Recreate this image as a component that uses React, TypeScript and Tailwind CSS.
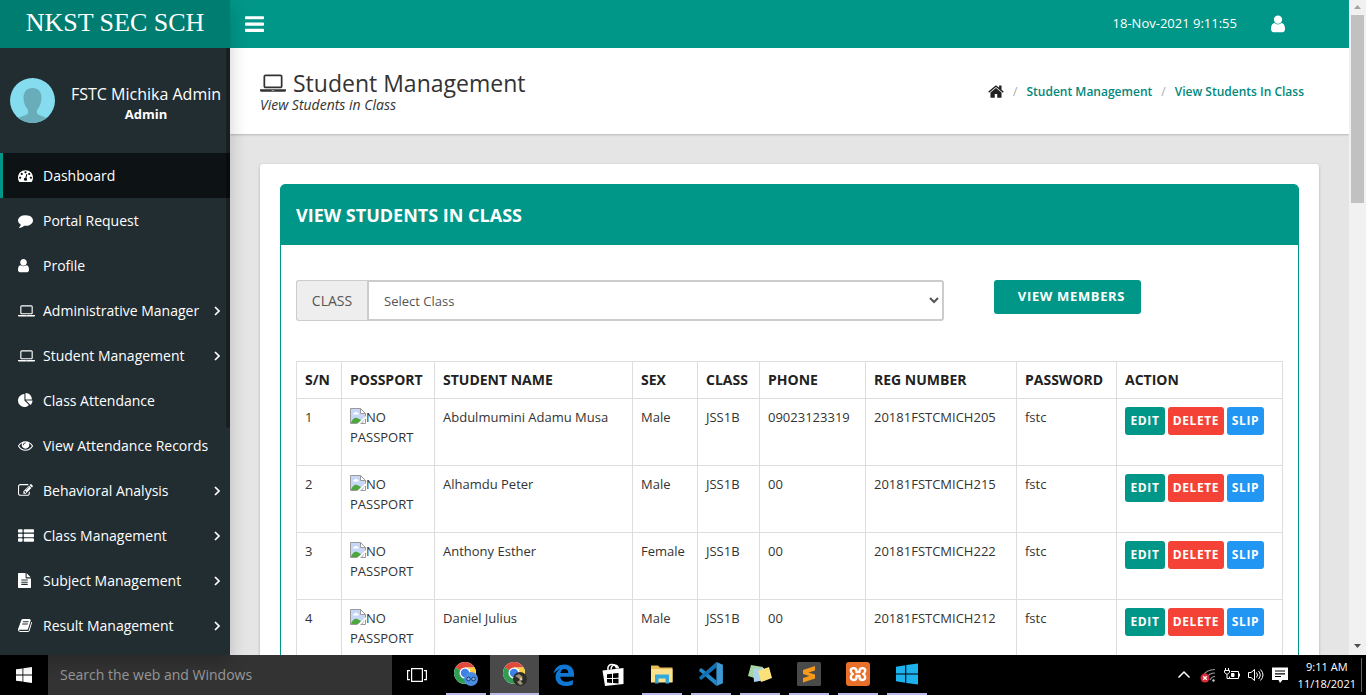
import React from "react";

type Glyph = { box: string; w: string; d: string };

const glyphs: Record<string, Glyph> = {
  dashboard: {
    box: "0 0 1792 1792",
    w: "w-[15px]",
    d: "M384 1152q0-53-37.500-90.500t-90.500-37.500-90.500 37.500-37.500 90.500 37.500 90.500 90.500 37.500 90.500-37.500 37.500-90.500zm192-448q0-53-37.500-90.500t-90.500-37.500-90.500 37.500-37.500 90.500 37.500 90.500 90.500 37.500 90.500-37.500 37.500-90.500zm428 481l101-382q6-26-7.500-48.500t-38.500-29.500-48 6.500-30 39.500l-101 382q-60 5-107 43.500t-63 98.500q-20 77 20 146t117 89 146-20 89-117q16-60-6-117t-72-91zm660-33q0-53-37.500-90.500t-90.500-37.500-90.500 37.500-37.500 90.500 37.500 90.500 90.500 37.500 90.500-37.500 37.500-90.500zm-640-640q0-53-37.500-90.500t-90.500-37.500-90.500 37.500-37.500 90.500 37.500 90.500 90.500 37.500 90.500-37.500 37.500-90.500zm448 192q0-53-37.500-90.500t-90.500-37.500-90.500 37.500-37.500 90.500 37.500 90.500 90.500 37.500 90.500-37.500 37.500-90.500zm320 448q0 261-141 483-19 29-54 29h-1402q-35 0-54-29-141-221-141-483 0-182 71-348t191-286 286-191 348-71 348 71 286 191 191 286 71 348z",
  },
  comment: {
    box: "0 0 1792 1792",
    w: "w-[15px]",
    d: "M1792 896q0 174-120 321.500t-326 233-450 85.500q-70 0-145-8-198 175-460 242-49 14-114 22-17 2-30.500-9t-17.500-29v-1q-3-4-.5-12t2-10 4.500-9.500l6-9 7-8.500 8-9q7-8 31-34.500t34.500-38 31-39.500 32.500-51 27-59 26-76q-157-89-247.500-220t-90.500-281q0-130 71-248.500t191-204.500 286-136.500 348-50.500q244 0 450 85.500t326 233 120 321.500z",
  },
  user: {
    box: "256 0 1280 1792",
    w: "w-[11px]",
    d: "M1536 1399q0 109-62.500 187t-150.500 78h-854q-88 0-150.500-78t-62.500-187q0-85 8.500-160.500t31.500-152 58.500-131 94-89 134.500-34.500q131 128 313 128t313-128q76 0 134.500 34.500t94 89 58.500 131 31.500 152 8.500 160.500zm-256-887q0 159-112.500 271.500t-271.500 112.500-271.500-112.500-112.500-271.500 112.500-271.500 271.500-112.500 271.500 112.500 112.500 271.500z",
  },
  laptop: {
    box: "0 0 1920 1792",
    w: "w-[17px]",
    d: "M416 1280q-66 0-113-47t-47-113v-704q0-66 47-113t113-47h1088q66 0 113 47t47 113v704q0 66-47 113t-113 47h-1088zm-32-864v704q0 13 9.500 22.500t22.500 9.500h1088q13 0 22.500-9.500t9.500-22.500v-704q0-13-9.500-22.500t-22.500-9.500h-1088q-13 0-22.500 9.500t-9.500 22.500zm1376 928h160v96q0 40-47 68t-113 28h-1600q-66 0-113-28t-47-68v-96h1760zm-720 96q16 0 16-16t-16-16h-160q-16 0-16 16t16 16h160z",
  },
  pie: {
    box: "0 0 1792 1792",
    w: "w-[15px]",
    d: "M768 890l546 546q-106 108-247.500 168t-298.500 60q-209 0-385.500-103t-279.500-279.500-103-385.500 103-385.500 279.500-279.500 385.500-103v762zm187 6h773q0 157-60 298.500t-168 247.500zm709-128h-768v-768q209 0 385.500 103t279.500 279.500 103 385.500z",
  },
  eye: {
    box: "0 0 1792 1792",
    w: "w-[15px]",
    d: "M1664 960q-152-236-381-353 61 104 61 225 0 185-131.500 316.500t-316.500 131.500-316.500-131.500-131.500-316.500q0-121 61-225-229 117-381 353 133 205 333.500 326.500t434.500 121.500 434.500-121.500 333.500-326.500zm-720-384q0-20-14-34t-34-14q-125 0-214.500 89.500t-89.500 214.500q0 20 14 34t34 14 34-14 14-34q0-86 61-147t147-61q20 0 34-14t14-34zm848 384q0 34-20 69-140 230-376.500 368.500t-499.500 138.500-499.500-139-376.500-368q-20-35-20-69t20-69q140-229 376.500-368t499.500-139 499.500 139 376.500 368q20 35 20 69z",
  },
  edit: {
    box: "0 0 1792 1792",
    w: "w-[15px]",
    d: "M888 1184l116-116-152-152-116 116v56h96v96h56zm440-720q-16-16-33 1l-350 350q-17 17-1 33t33-1l350-350q17-17 1-33zm80 594v190q0 119-84.500 203.500t-203.500 84.500h-832q-119 0-203.500-84.500t-84.500-203.500v-832q0-119 84.500-203.500t203.500-84.500h832q63 0 117 25 15 7 18 23 3 17-9 29l-49 49q-14 14-32 8-23-6-45-6h-832q-66 0-113 47t-47 113v832q0 66 47 113t113 47h832q66 0 113-47t47-113v-126q0-13 9-22l64-64q15-15 35-7t20 29zm-96-738l288 288-672 672h-288v-288zm444 132l-92 92-288-288 92-92q28-28 68-28t68 28l152 152q28 28 28 68t-28 68z",
  },
  list: {
    box: "0 0 1792 1792",
    w: "w-4",
    d: "M96 1152h320q96 0 96 96v192q0 96-96 96h-320q-96 0-96-96v-192q0-96 96-96zM96 640h320q96 0 96 96v192q0 96-96 96h-320q-96 0-96-96v-192q0-96 96-96zM736 1152h960q96 0 96 96v192q0 96-96 96h-960q-96 0-96-96v-192q0-96 96-96zM96 128h320q96 0 96 96v192q0 96-96 96h-320q-96 0-96-96v-192q0-96 96-96zM736 640h960q96 0 96 96v192q0 96-96 96h-960q-96 0-96-96v-192q0-96 96-96zM736 128h960q96 0 96 96v192q0 96-96 96h-960q-96 0-96-96v-192q0-96 96-96z",
  },
  file: {
    box: "128 0 1536 1792",
    w: "w-[13px]",
    d: "M1596 476q14 14 28 36h-472v-472q22 14 36 28zm-476 164h544v1056q0 40-28 68t-68 28h-1344q-40 0-68-28t-28-68v-1600q0-40 28-68t68-28h800v544q0 40 28 68t68 28zm160 736v-64q0-14-9-23t-23-9h-704q-14 0-23 9t-9 23v64q0 14 9 23t23 9h704q14 0 23-9t9-23zm0-256v-64q0-14-9-23t-23-9h-704q-14 0-23 9t-9 23v64q0 14 9 23t23 9h704q14 0 23-9t9-23zm0-256v-64q0-14-9-23t-23-9h-704q-14 0-23 9t-9 23v64q0 14 9 23t23 9h704q14 0 23-9t9-23z",
  },
  book: {
    box: "64 0 1664 1792",
    w: "w-[14px]",
    d: "M1703 478q40 57 18 129l-275 906q-19 64-76.500 107.500t-122.500 43.500h-923q-77 0-148.500-53.500t-99.500-131.500q-24-67-2-127 0-4 3-27t4-37q1-8-3-21.500t-3-19.500q2-11 8-21t16.500-23.500 16.500-23.500q23-38 45-91.500t30-91.500q3-10 .5-30t-.5-28q3-11 17-28t17-23q21-36 42-92t25-90q1-9-2.500-32t.5-28q4-13 22-30.500t22-22.500q19-26 42.500-84.500t27.500-96.500q1-8-3-25.500t-2-26.500q2-8 9-18t18-23 17-21q8-12 16.500-30.500t15-35 16-36 19.500-32 26.500-23.500 36-11.500 47.500 5.500l-1 3q38-9 51-9h761q74 0 114 56t18 130l-274 906q-36 119-71.500 153.500t-128.500 34.500h-869q-27 0-38 15-11 16-1 43 24 70 144 70h923q29 0 56-15.500t35-41.500l300-987q7-22 5-57 38 15 59 43zm-1064 2q-4 13 2 22.500t20 9.500h608q13 0 25.500-9.500t16.500-22.500l21-64q4-13-2-22.500t-20-9.500h-608q-13 0-25.500 9.500t-16.500 22.500zm-83 256q-4 13 2 22.500t20 9.500h608q13 0 25.500-9.500t16.500-22.500l21-64q4-13-2-22.500t-20-9.500h-608q-13 0-25.500 9.500t-16.500 22.500z",
  },
  home: {
    box: "64 0 1664 1792",
    w: "w-4",
    d: "M1472 992v480q0 26-19 45t-45 19h-384v-384h-256v384h-384q-26 0-45-19t-19-45v-480q0-1 .5-3t.5-3l575-474 575 474q1 2 1 6zm223-69l-62 74q-8 9-21 11h-3q-13 0-21-7l-692-577-692 577q-12 8-24 7-13-2-21-11l-62-74q-8-10-7-23.500t11-21.500l719-599q32-26 76-26t76 26l244 204v-195q0-14 9-23t23-9h192q14 0 23 9t9 23v408l219 182q10 8 11 21.500t-7 23.500z",
  },
  bars: {
    box: "128 0 1536 1792",
    w: "w-[19px]",
    d: "M1664 1344v128q0 26-19 45t-45 19h-1408q-26 0-45-19t-19-45v-128q0-26 19-45t45-19h1408q26 0 45 19t19 45zm0-512v128q0 26-19 45t-45 19h-1408q-26 0-45-19t-19-45v-128q0-26 19-45t45-19h1408q26 0 45 19t19 45zm0-512v128q0 26-19 45t-45 19h-1408q-26 0-45-19t-19-45v-128q0-26 19-45t45-19h1408q26 0 45 19t19 45z",
  },
};

function Icon({ name, className }: { name: string; className?: string }) {
  const g = glyphs[name];
  return (
    <svg viewBox={g.box} className={className ?? g.w} fill="currentColor" aria-hidden="true">
      <path d={g.d} />
    </svg>
  );
}

function Angle() {
  return (
    <svg viewBox="0 0 6 10" className="h-[10px] w-[6px]" fill="none" stroke="currentColor" strokeWidth="1.700" aria-hidden="true">
      <path d="M1 1l4 4-4 4" />
    </svg>
  );
}

const menu = [
  { label: "Dashboard", icon: "dashboard", active: true },
  { label: "Portal Request", icon: "comment" },
  { label: "Profile", icon: "user" },
  { label: "Administrative Manager", icon: "laptop", sub: true },
  { label: "Student Management", icon: "laptop", sub: true },
  { label: "Class Attendance", icon: "pie" },
  { label: "View Attendance Records", icon: "eye" },
  { label: "Behavioral Analysis", icon: "edit", sub: true },
  { label: "Class Management", icon: "list", sub: true },
  { label: "Subject Management", icon: "file", sub: true },
  { label: "Result Management", icon: "book", sub: true },
];

const students = [
  { name: "Abdulmumini Adamu Musa", sex: "Male", phone: "09023123319", reg: "20181FSTCMICH205" },
  { name: "Alhamdu Peter", sex: "Male", phone: "00", reg: "20181FSTCMICH215" },
  { name: "Anthony Esther", sex: "Female", phone: "00", reg: "20181FSTCMICH222" },
  { name: "Daniel Julius", sex: "Male", phone: "00", reg: "20181FSTCMICH212" },
];

const columns = [
  { label: "S/N", w: "w-[45px]" },
  { label: "POSSPORT", w: "w-[93px]" },
  { label: "STUDENT NAME", w: "w-[198px]" },
  { label: "SEX", w: "w-[65px]" },
  { label: "CLASS", w: "w-[62px]" },
  { label: "PHONE", w: "w-[106px]" },
  { label: "REG NUMBER", w: "w-[151px]" },
  { label: "PASSWORD", w: "w-[100px]" },
  { label: "ACTION", w: "" },
];

function Sidebar() {
  return (
    <aside className="z-10 flex w-[230px] shrink-0 flex-col bg-[#222d32] text-white shadow-[0_8px_17px_rgba(0,0,0,0.2)]">
      <a
        href="#"
        className="flex h-12 shrink-0 items-center justify-center bg-[#007d71] pb-0.5 font-['Liberation_Serif',serif] text-[26px] leading-none"
      >
        NKST SEC SCH
      </a>
      <div className="relative flex min-h-0 flex-1 flex-col overflow-hidden">
        <div className="flex h-[105px] shrink-0 items-center gap-4 pl-[10px]">
          <svg viewBox="0 0 45 45" className="size-[45px] shrink-0" role="img" aria-label="Avatar">
            <clipPath id="avatar">
              <circle cx="22.500" cy="22.500" r="22.500" />
            </clipPath>
            <g clipPath="url(#avatar)">
              <rect width="45" height="45" fill="#85dcee" />
              <path
                d="M22.500 10c6 0 9 4 9 10 0 5-2 9-4.500 12v3c0 3 12 3 14 10H4c2-7 14-7 14-10v-3c-2.500-3-4.500-7-4.500-12 0-6 3-10 9-10z"
                fill="#69adba"
              />
            </g>
          </svg>
          <div className="pt-1.5 text-center whitespace-nowrap">
            <p className="text-base leading-5">FSTC Michika Admin</p>
            <p className="text-[13px] leading-5 font-bold">Admin</p>
          </div>
        </div>
        <nav>
          <ul>
            {menu.map((m) => (
              <li key={m.label}>
                <a
                  href="#"
                  className={
                    m.active
                      ? "flex h-[45px] items-center border-l-[3px] border-[#009688] bg-[#0d1214] pr-[10px] pl-[15px] text-sm"
                      : "flex h-[45px] items-center border-l-[3px] border-transparent pr-[10px] pl-[15px] text-sm"
                  }
                >
                  <span className="w-[25px] shrink-0">
                    <Icon name={m.icon} />
                  </span>
                  <span className="flex-1 whitespace-nowrap">{m.label}</span>
                  {m.sub && <Angle />}
                </a>
              </li>
            ))}
          </ul>
        </nav>
        <div className="absolute top-0 right-0 h-[380px] w-1 rounded-b bg-black/30" />
      </div>
    </aside>
  );
}

function BrokenImage() {
  return (
    <svg viewBox="0 0 16 16" className="inline-block size-4 align-text-top" aria-hidden="true">
      <path d="M.5.5h10l5 5v4l-4 6H.5z" fill="#c6d8f5" stroke="#9a9a9a" />
      <path d="M10.500.5v5h5z" fill="#fff" stroke="#9a9a9a" />
      <path d="M3 6.500q0-2 2-2 1-1.500 2.500 0 1.500.5 1 2z" fill="#fff" />
      <path d="M1 15c1-4 4-6 6-5 2 .5 2.500 1.500 4 2l-2 3z" fill="#4ea63f" />
      <path d="M16 8v2l-6 6H7z" fill="#fff" />
      <path d="M15.500 11v4.500H11" fill="none" stroke="#9a9a9a" />
    </svg>
  );
}

function Content() {
  return (
    <main className="min-h-0 flex-1 overflow-hidden bg-[#e5e5e5]">
      <div className="flex h-[86px] items-center justify-between bg-white pr-[45px] pl-[30px] shadow-[0_1px_2px_rgba(0,0,0,0.2)]">
        <div className="text-[#333]">
          <h1 className="flex items-center gap-[7px] text-[23px] leading-7">
            <Icon name="laptop" className="w-[26px]" />
            Student Management
          </h1>
          <p className="text-sm leading-4 italic">View Students in Class</p>
        </div>
        <nav aria-label="Breadcrumb">
          <ol className="flex items-center gap-[9px] pt-0.5 text-xs font-semibold text-[#00897b]">
            <li className="text-[#222]">
              <a href="#" aria-label="Home">
                <Icon name="home" />
              </a>
            </li>
            <li className="font-normal text-[#aaa]">/</li>
            <li>
              <a href="#">Student Management</a>
            </li>
            <li className="font-normal text-[#aaa]">/</li>
            <li>
              <a href="#">View Students In Class</a>
            </li>
          </ol>
        </nav>
      </div>

      <div className="p-[30px]">
        <section className="rounded-[3px] bg-white p-5 shadow-[0_1px_3px_rgba(0,0,0,0.25)]">
          <div className="rounded-t-[5px] border border-[#009688]">
            <h2 className="flex h-[60px] items-center rounded-t-[3px] bg-[#009688] px-[15px] text-lg font-bold text-white">
              VIEW STUDENTS IN CLASS
            </h2>
            <div className="px-[15px] pt-[35px] pb-5">
              <form className="flex items-start" onSubmit={(e) => e.preventDefault()}>
                <div className="flex h-[41px] flex-1 text-[#555]">
                  <label
                    htmlFor="class"
                    className="flex w-[71px] items-center justify-center rounded-l-[3px] border border-r-0 border-[#ccc] bg-[#eee] text-sm"
                  >
                    CLASS
                  </label>
                  <select
                    id="class"
                    className="min-w-0 flex-1 rounded-r-[3px] border-2 border-[#ccc] bg-white pl-[11px] text-[13px]"
                  >
                    <option>Select Class</option>
                  </select>
                </div>
                <div className="ml-[50px] w-[289px]">
                  <button className="h-[34px] w-[147px] rounded-[3px] bg-[#009688] pl-2 text-[13px] font-bold tracking-wider whitespace-nowrap text-white">
                    VIEW MEMBERS
                  </button>
                </div>
              </form>

              <table className="mt-10 w-full table-fixed border-collapse text-[13px] leading-5 text-[#333]">
                <thead>
                  <tr className="h-[37px]">
                    {columns.map((c) => (
                      <th
                        key={c.label}
                        className={`${c.w} border border-[#ddd] px-2 text-left text-sm font-bold whitespace-nowrap text-[#222]`}
                      >
                        {c.label}
                      </th>
                    ))}
                  </tr>
                </thead>
                <tbody>
                  {students.map((s, i) => (
                    <tr key={s.reg} className="h-[67px] align-top *:border *:border-[#ddd] *:px-2 *:pt-2">
                      <td>{i + 1}</td>
                      <td>
                        <BrokenImage />
                        NO PASSPORT
                      </td>
                      <td>{s.name}</td>
                      <td>{s.sex}</td>
                      <td>JSS1B</td>
                      <td>{s.phone}</td>
                      <td>{s.reg}</td>
                      <td>fstc</td>
                      <td>
                        <div className="flex gap-[3px] text-xs font-bold tracking-wider text-white">
                          <button className="h-7 w-10 rounded-[3px] bg-[#009688]">EDIT</button>
                          <button className="h-7 w-14 rounded-[3px] bg-[#f44336]">DELETE</button>
                          <button className="h-7 w-[37px] rounded-[3px] bg-[#2196f3]">SLIP</button>
                        </div>
                      </td>
                    </tr>
                  ))}
                </tbody>
              </table>
            </div>
          </div>
        </section>
      </div>
    </main>
  );
}

function ChromeLogo({ children }: { children?: React.ReactNode }) {
  return (
    <svg viewBox="0 0 26 26" className="size-[26px]" aria-hidden="true">
      <circle cx="12" cy="12" r="11" fill="#fff" />
      <path d="M12 12L2.500 6.500A11 11 0 0 1 21.500 6.500H12z" fill="#e04a3a" />
      <path d="M12 12L21.500 6.500A11 11 0 0 1 12 23l4-8z" fill="#fbcb3c" />
      <path d="M12 12L2.500 6.500A11 11 0 0 0 12 23l4-7z" fill="#2f9e53" />
      <path d="M12 6.500h9.500A11 11 0 0 1 22.500 9L14 8z" fill="#fbcb3c" />
      <circle cx="12" cy="12" r="5.500" fill="#fff" />
      <circle cx="12" cy="12" r="4.200" fill="#3f7fe8" />
      {children}
    </svg>
  );
}

const apps: { name: string; open?: boolean; active?: boolean; art: React.ReactNode }[] = [
  {
    name: "Chrome",
    open: true,
    art: (
      <ChromeLogo>
        <circle cx="18" cy="18" r="7" fill="#4a8de0" />
        <circle cx="15.500" cy="18" r="1.800" fill="#8db8ee" stroke="#153a70" />
        <circle cx="20.500" cy="18" r="1.800" fill="#8db8ee" stroke="#153a70" />
      </ChromeLogo>
    ),
  },
  {
    name: "Chrome profile",
    open: true,
    active: true,
    art: (
      <ChromeLogo>
        <circle cx="18" cy="18" r="7" fill="#2e2c28" />
        <path d="M13 15l4-2 4 3-3 2zM15 21l3-2 3 4-3 1z" fill="#9b9477" />
        <circle cx="19" cy="18" r="1.500" fill="#d8c9a0" />
      </ChromeLogo>
    ),
  },
  {
    name: "Edge",
    art: (
      <svg viewBox="0 0 24 24" className="size-6" aria-hidden="true">
        <path
          d="M1.500 11C2.300 4.800 7 1.500 12.300 1.500c6 0 9.700 4 9.700 9.500v2.800H8.300c.3 3.400 2.700 5 6 5 2.400 0 4.700-.6 6.600-1.800v4.400c-2.200 1.200-4.900 1.600-7.400 1.600-6 0-10-3.700-10-9.200 0-3.600 2-6.400 5.100-8-3.400 1-5.700 3-7.100 5.200zM8.500 10h7.800c0-2.600-1.400-4-3.700-4-2.200 0-3.800 1.600-4.100 4z"
          fill="#0f78d4"
        />
      </svg>
    ),
  },
  {
    name: "Store",
    art: (
      <svg viewBox="0 0 24 24" className="size-6" aria-hidden="true">
        <path
          d="M7 7c-.5-3 1-5 3-5.500 2.500-.5 5 1 5.500 4M10 6.500c0-3 2-5 4-4.500 2 .4 3 1.500 3.500 3.500"
          fill="none"
          stroke="#fff"
          strokeWidth="1.500"
        />
        <path d="M1.500 7.500L22.500 5v16L4 23z" fill="#fff" />
        <path d="M6 11.300l5-.6v4.200l-5 .2zM12 10.600l5.500-.7v4.800l-5.500.2zM6 16l5-.1v4L6 19.600zM12 15.900l5.500-.1v4.700l-5.500-.5z" fill="#000" />
      </svg>
    ),
  },
  {
    name: "File Explorer",
    open: true,
    art: (
      <svg viewBox="0 0 24 24" className="size-6" aria-hidden="true">
        <path d="M1 3.500h7l2 2h12.500V20H1z" fill="#e8bd55" />
        <path d="M1 7h21.500v13.500H1z" fill="#fbe08e" />
        <path d="M5 12.500h14v9h-3.500v-5h-7v5H5z" fill="#33a9dc" />
      </svg>
    ),
  },
  {
    name: "Visual Studio Code",
    open: true,
    art: (
      <svg viewBox="0 0 24 24" className="size-[26px]" aria-hidden="true">
        <path d="M1 8l2-1.500L17 18v5L1.500 9.500z" fill="#2489ca" />
        <path d="M1 16l2 1.500L17 6V1L1.500 14.500z" fill="#1070b3" />
        <path d="M17 1l6 2.500v17L17 23z" fill="#3c99d4" />
      </svg>
    ),
  },
  {
    name: "Sticky Notes",
    open: true,
    art: (
      <svg viewBox="0 0 26 24" className="size-[26px]" aria-hidden="true">
        <path d="M4 3l12 2-2 13L1 14z" fill="#a5d6a0" />
        <path d="M6 7l11-1 2 12-12 2z" fill="#a9d4ea" />
        <path d="M11 9l11-4 3 11-11 4z" fill="#fae17a" />
      </svg>
    ),
  },
  {
    name: "Sublime Text",
    open: true,
    art: (
      <svg viewBox="0 0 24 24" className="size-6" aria-hidden="true">
        <rect width="24" height="24" rx="1.500" fill="#4a4a4a" />
        <path d="M6 8l12-4v4.500L11.500 10.500 18 12.500v4L6 20.500V16l6.500-2L6 12z" fill="#f79a1c" />
      </svg>
    ),
  },
  {
    name: "XAMPP",
    open: true,
    art: (
      <svg viewBox="0 0 24 24" className="size-6" aria-hidden="true">
        <rect width="24" height="24" rx="3" fill="#e8702a" />
        <path
          d="M10.500 8.500C9.500 5 4.500 5.500 4.800 9c.2 2 2.200 3 2.200 3s-2.200 1-2.200 3.200c.2 3.500 5.200 3.800 5.700.3M13.500 8.500c1-3.500 6-3 5.700.5-.2 2-2.200 3-2.200 3s2.200 1 2.200 3.200c-.2 3.500-5.200 3.800-5.700.3M10.500 8.500v1.500h3V8.500M10.500 15.500V14h3v1.500"
          fill="none"
          stroke="#fff"
          strokeWidth="2.400"
          strokeLinejoin="round"
        />
      </svg>
    ),
  },
  {
    name: "Windows",
    open: true,
    art: (
      <svg viewBox="0 0 24 24" className="size-[22px]" aria-hidden="true">
        <path d="M0 4l10-1.500V11.500H0zM11.200 2.300L24 .5v11H11.200zM0 12.500h10v9L0 20zM11.200 12.500H24v11l-12.800-1.800z" fill="#1cb2ee" />
      </svg>
    ),
  },
];

function Taskbar() {
  return (
    <footer className="flex h-10 shrink-0 items-stretch bg-black text-white">
      <button aria-label="Start" className="flex w-12 items-center justify-center">
        <svg viewBox="0 0 16 16" className="size-4" fill="#fff" aria-hidden="true">
          <path d="M0 2.300L6.500 1.400v6.200H0zM7.300 1.300L16 0v7.600H7.300zM0 8.400h6.500v6.200L0 13.700zM7.300 8.400H16V16l-8.700-1.300z" />
        </svg>
      </button>
      <input
        aria-label="Search"
        placeholder="Search the web and Windows"
        className="w-[344px] bg-[#333] px-3 text-sm text-white placeholder:text-[#999]"
      />
      <button aria-label="Task View" className="flex w-[49px] items-center justify-center">
        <svg viewBox="0 0 20 16" className="h-4 w-5" fill="none" stroke="#fff" strokeWidth="1.200" aria-hidden="true">
          <path d="M4.600 1.600h10.800v12.800H4.600zM3 3.600H.6v9H3M17 3.600h2.400v9H17" />
        </svg>
      </button>
      <div className="flex">
        {apps.map((a) => (
          <button
            key={a.name}
            aria-label={a.name}
            className={a.active ? "flex w-[49px] flex-col items-center bg-[#4a4a4a]" : "flex w-[49px] flex-col items-center"}
          >
            <span className="flex flex-1 items-center justify-center">{a.art}</span>
            {a.open && <span className={a.active ? "h-0.5 w-full bg-[#b9bce8]" : "h-0.5 w-10 bg-[#b9bce8]"} />}
          </button>
        ))}
      </div>
      <div className="ml-auto flex items-center gap-2 pr-1">
        <svg viewBox="0 0 16 16" className="size-4" fill="none" stroke="#fff" strokeWidth="1.500" aria-hidden="true">
          <path d="M2.500 10.500L8 5l5.500 5.500" />
        </svg>
        <svg viewBox="0 0 16 16" className="size-4" fill="none" aria-hidden="true">
          <path d="M3 9C5 5 9 2.500 15 2.500M7 11c1-3 4-5 8-5M10 13c1-2 2.500-3.500 5-3.500" stroke="#999" strokeWidth="1.200" />
          <circle cx="13.500" cy="13.500" r="1.200" fill="#ccc" />
          <circle cx="5" cy="11" r="4.500" fill="#d8283a" />
          <path d="M3.200 9.200l3.600 3.600M6.800 9.200l-3.600 3.600" stroke="#fff" strokeWidth="1.300" />
        </svg>
        <svg viewBox="0 0 16 16" className="size-4" fill="none" stroke="#fff" aria-hidden="true">
          <path d="M7 4.500h7.500v7h-9v-2M15.500 6.500v3M1.500 1v3M4.500 1v3M.5 3.500h5v2L3 7.500.5 5.500zM3 7.500v4h2.500" />
          <path d="M7.500 6.500h2.500v3H7.500z" fill="#fff" />
        </svg>
        <svg viewBox="0 0 16 16" className="size-4" fill="none" stroke="#fff" aria-hidden="true">
          <path d="M.5 5.500h2.500l3.500-3v11l-3.500-3H.5zM8.500 5.500q2 2.500 0 5M10.500 4q3.500 4 0 8M12.500 2.500q5 5.500 0 11" />
        </svg>
        <svg viewBox="0 0 16 16" className="size-4" aria-hidden="true">
          <path d="M0 .5h16v12.500H10.500L8 16l-1.500-3H0z" fill="#fff" />
          <path d="M3 4h10M3 6.800h10M3 9.500h6" stroke="#000" strokeWidth="1.200" />
        </svg>
        <div className="ml-0.5 border-r border-[#666] pr-[5px] text-center text-[11px] leading-[17px] whitespace-nowrap">
          <p>9:11 AM</p>
          <p>11/18/2021</p>
        </div>
      </div>
    </footer>
  );
}

export default function App() {
  return (
    <div className="flex h-screen flex-col overflow-hidden bg-white font-['Open_Sans','Noto_Sans',sans-serif]">
      <div className="flex min-h-0 flex-1">
        <Sidebar />
        <div className="flex min-w-0 flex-1 flex-col">
          <header className="flex h-12 shrink-0 items-center justify-between bg-[#009688] pr-16 pl-[15px] text-white">
            <button aria-label="Toggle sidebar">
              <Icon name="bars" />
            </button>
            <div className="flex items-center gap-[34px] text-[13px]">
              <time>18-Nov-2021 9:11:55</time>
              <a href="#" aria-label="Account">
                <Icon name="user" className="w-[14px]" />
              </a>
            </div>
          </header>
          <Content />
        </div>
        <div className="flex w-[17px] shrink-0 flex-col items-center justify-between bg-[#f1f1f1]" aria-hidden="true">
          <div className="flex flex-col items-center">
            <svg viewBox="0 0 17 15" className="h-[15px] w-[17px]">
              <path d="M5 9l3.500-4L12 9z" fill="#a3a3a3" />
            </svg>
            <div className="h-[188px] w-[13px] bg-[#c1c1c1]" />
          </div>
          <svg viewBox="0 0 17 17" className="size-[17px]">
            <path d="M5 6l3.500 4L12 6z" fill="#505050" />
          </svg>
        </div>
      </div>
      <Taskbar />
    </div>
  );
}
